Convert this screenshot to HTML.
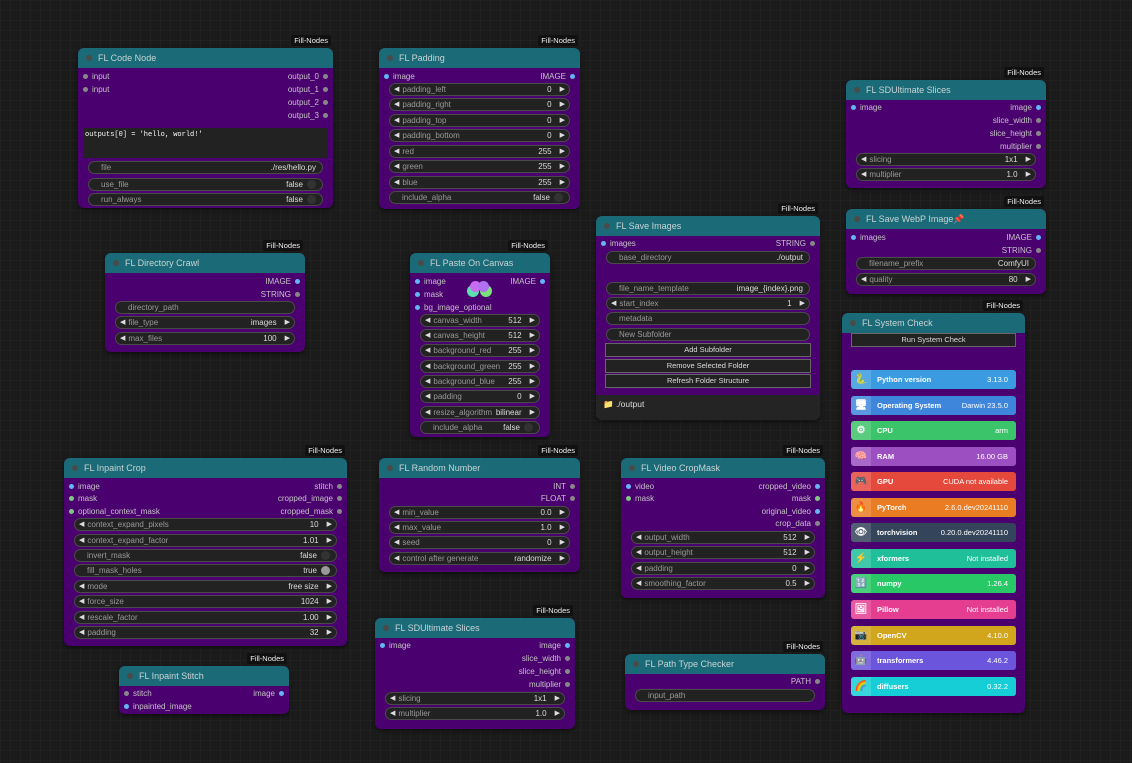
<!DOCTYPE html>
<html><head><meta charset="utf-8"><style>
*{box-sizing:border-box;margin:0;padding:0}
body{width:1132px;height:763px;overflow:hidden;background:#1b1b1b;background-image:linear-gradient(#212121 1px,transparent 1px),linear-gradient(90deg,#212121 1px,transparent 1px);background-size:10px 10px;font-family:"Liberation Sans",sans-serif;position:relative}
.n{position:absolute;background:#4a016f;border-radius:6px;box-shadow:0 2px 4px rgba(0,0,0,.5)}
.t{height:20px;background:#1a6b77;border-radius:6px 6px 0 0;color:#c9d3d6;font-size:9px;line-height:20px;padding-left:20px;position:relative}
.t:before{content:"";position:absolute;left:8px;top:7px;width:6px;height:6px;border-radius:50%;background:#4a4a4a}
.bd{position:absolute;top:-13px;right:2px;background:#111;color:#eee;font-size:7.5px;padding:1px 3px;border-radius:2px;line-height:9px}
.r{position:absolute;height:10px;margin-top:-5px;font-size:8px;line-height:10px;color:#c4c4c4;white-space:nowrap}
.l{left:4px;padding-left:10px}
.rr{right:4px;padding-right:10px}
.l:before,.rr:after{content:"";position:absolute;top:2px;width:5px;height:5px;border-radius:50%;background:var(--c,#888)}
.l:before{left:1px}.rr:after{right:1px}
.w{position:absolute;left:10px;right:10px;height:13px;margin-top:-7px;background:#222;border:1px solid #4a4a4a;border-radius:7px;font-size:8px;line-height:11px;color:#9a9a9a;display:flex;padding:0 6px 0 12px;white-space:nowrap}
.w span{flex:1}.w b{font-weight:normal;color:#ddd}
.w.a{padding:0 4px}
.w.a:before{content:"◀";color:#ddd;font-size:7px;margin-right:3px}
.w.a:after{content:"▶";color:#ddd;font-size:7px;margin-left:8px}
.w i{display:inline-block;width:9px;height:9px;border-radius:50%;background:#333;margin:1px 0 0 4px}
.btn{position:absolute;left:9px;right:9px;height:14px;margin-top:-7px;background:#222;border:1px solid #666;color:#ddd;font-size:7.5px;line-height:12px;text-align:center}
.sc{position:absolute;left:9px;right:9px;height:19px;border-radius:3px;font-size:7.5px;font-weight:bold;color:#fff;line-height:19px;display:flex;padding-right:8px}
.sc em{font-style:normal;width:20px;height:19px;background:rgba(255,255,255,.15);border-radius:3px 0 0 3px;text-align:center;font-size:10px;margin-right:6px}
.sc span{flex:1}.sc b{font-weight:normal}
</style></head><body>

<div class="n" style="left:78px;top:48px;width:255px;height:160px">
<div class="t">FL Code Node</div><div class="bd">Fill-Nodes</div>
<div class="r l" style="top:29px">input</div><div class="r l" style="top:42px">input</div>
<div class="r rr" style="top:29px">output_0</div><div class="r rr" style="top:42px">output_1</div>
<div class="r rr" style="top:55px">output_2</div><div class="r rr" style="top:68px">output_3</div>
<div style="position:absolute;left:6px;right:6px;top:80px;height:30px;background:#222;color:#fff;font-family:'Liberation Mono',monospace;font-size:7px;padding:3px 1px">outputs[0] = 'hello, world!'</div>
<div class="w" style="top:120px"><span>file</span><b>./res/hello.py</b></div>
<div class="w" style="top:137px"><span>use_file</span><b>false</b><i></i></div>
<div class="w" style="top:152px"><span>run_always</span><b>false</b><i></i></div>
</div>

<div class="n" style="left:379px;top:48px;width:201px;height:161px">
<div class="t">FL Padding</div><div class="bd">Fill-Nodes</div>
<div class="r l" style="top:29px;--c:#64b5f6">image</div><div class="r rr" style="top:29px;--c:#64b5f6">IMAGE</div>
<div class="w a" style="top:42px"><span>padding_left</span><b>0</b></div>
<div class="w a" style="top:57px"><span>padding_right</span><b>0</b></div>
<div class="w a" style="top:73px"><span>padding_top</span><b>0</b></div>
<div class="w a" style="top:88px"><span>padding_bottom</span><b>0</b></div>
<div class="w a" style="top:104px"><span>red</span><b>255</b></div>
<div class="w a" style="top:119px"><span>green</span><b>255</b></div>
<div class="w a" style="top:135px"><span>blue</span><b>255</b></div>
<div class="w" style="top:150px"><span>include_alpha</span><b>false</b><i></i></div>
</div>

<div class="n" style="left:846px;top:80px;width:200px;height:108px">
<div class="t">FL SDUltimate Slices</div><div class="bd">Fill-Nodes</div>
<div class="r l" style="top:28px;--c:#64b5f6">image</div><div class="r rr" style="top:28px;--c:#64b5f6">image</div>
<div class="r rr" style="top:41px">slice_width</div><div class="r rr" style="top:54px">slice_height</div><div class="r rr" style="top:67px">multiplier</div>
<div class="w a" style="top:80px"><span>slicing</span><b>1x1</b></div>
<div class="w a" style="top:95px"><span>multiplier</span><b>1.0</b></div>
</div>

<div class="n" style="left:846px;top:209px;width:200px;height:85px">
<div class="t">FL Save WebP Image📌</div><div class="bd">Fill-Nodes</div>
<div class="r l" style="top:29px;--c:#64b5f6">images</div><div class="r rr" style="top:29px;--c:#64b5f6">IMAGE</div>
<div class="r rr" style="top:42px">STRING</div>
<div class="w" style="top:55px"><span>filename_prefix</span><b>ComfyUI</b></div>
<div class="w a" style="top:71px"><span>quality</span><b>80</b></div>
</div>

<div class="n" style="left:842px;top:313px;width:183px;height:400px">
<div class="t">FL System Check</div><div class="bd">Fill-Nodes</div>
<div class="btn" style="top:27px;border-radius:0">Run System Check</div>
<div class="sc" style="top:57px;background:#3a9be0"><em>🐍</em><span>Python version</span><b>3.13.0</b></div>
<div class="sc" style="top:83px;background:#3e86dc"><em>🖥</em><span>Operating System</span><b>Darwin 23.5.0</b></div>
<div class="sc" style="top:108px;background:#3cc46a"><em>⚙</em><span>CPU</span><b>arm</b></div>
<div class="sc" style="top:134px;background:#9b4fc0"><em>🧠</em><span>RAM</span><b>16.00 GB</b></div>
<div class="sc" style="top:159px;background:#e5493c"><em>🎮</em><span>GPU</span><b>CUDA not available</b></div>
<div class="sc" style="top:185px;background:#ea7d24"><em>🔥</em><span>PyTorch</span><b>2.6.0.dev20241110</b></div>
<div class="sc" style="top:210px;background:#34445a"><em>👁</em><span>torchvision</span><b>0.20.0.dev20241110</b></div>
<div class="sc" style="top:236px;background:#1fbf9a"><em>⚡</em><span>xformers</span><b>Not installed</b></div>
<div class="sc" style="top:261px;background:#28c866"><em>🔢</em><span>numpy</span><b>1.26.4</b></div>
<div class="sc" style="top:287px;background:#e53d8f"><em>🖼</em><span>Pillow</span><b>Not installed</b></div>
<div class="sc" style="top:313px;background:#d1a51c"><em>📷</em><span>OpenCV</span><b>4.10.0</b></div>
<div class="sc" style="top:338px;background:#6a55dc"><em>🤖</em><span>transformers</span><b>4.46.2</b></div>
<div class="sc" style="top:364px;background:#16cfd6"><em>🌈</em><span>diffusers</span><b>0.32.2</b></div>
</div>

<div class="n" style="left:105px;top:253px;width:200px;height:99px">
<div class="t">FL Directory Crawl</div><div class="bd">Fill-Nodes</div>
<div class="r rr" style="top:29px;--c:#64b5f6">IMAGE</div><div class="r rr" style="top:42px">STRING</div>
<div class="w" style="top:55px"><span>directory_path</span></div>
<div class="w a" style="top:70px"><span>file_type</span><b>images</b></div>
<div class="w a" style="top:86px"><span>max_files</span><b>100</b></div>
</div>

<div class="n" style="left:410px;top:253px;width:140px;height:184px">
<div class="t">FL Paste On Canvas</div><div class="bd">Fill-Nodes</div>
<div class="r l" style="top:29px;--c:#64b5f6">image</div><div class="r l" style="top:42px;--c:#64b5f6">mask</div><div class="r l" style="top:55px;--c:#64b5f6">bg_image_optional</div>
<div class="r rr" style="top:29px;--c:#64b5f6">IMAGE</div>
<div style="position:absolute;left:57px;top:28px;width:26px;height:18px">
<div style="position:absolute;left:0;top:4px;width:12px;height:12px;border-radius:50%;background:#5ce0b0"></div>
<div style="position:absolute;left:13px;top:4px;width:12px;height:12px;border-radius:50%;background:#7ae27a"></div>
<div style="position:absolute;left:3px;top:0;width:11px;height:11px;border-radius:50%;background:#c86cf0"></div>
<div style="position:absolute;left:11px;top:0;width:11px;height:11px;border-radius:50%;background:#b070f0"></div></div>
<div class="w a" style="top:68px"><span>canvas_width</span><b>512</b></div>
<div class="w a" style="top:83px"><span>canvas_height</span><b>512</b></div>
<div class="w a" style="top:98px"><span>background_red</span><b>255</b></div>
<div class="w a" style="top:114px"><span>background_green</span><b>255</b></div>
<div class="w a" style="top:129px"><span>background_blue</span><b>255</b></div>
<div class="w a" style="top:144px"><span>padding</span><b>0</b></div>
<div class="w a" style="top:160px"><span>resize_algorithm</span><b>bilinear</b></div>
<div class="w" style="top:175px"><span>include_alpha</span><b>false</b><i></i></div>
</div>

<div class="n" style="left:596px;top:216px;width:224px;height:204px;background:linear-gradient(#4a016f 179px,#242424 179px)">
<div class="t">FL Save Images</div><div class="bd">Fill-Nodes</div>
<div class="r l" style="top:28px;--c:#64b5f6">images</div><div class="r rr" style="top:28px">STRING</div>
<div class="w" style="top:42px"><span>base_directory</span><b>./output</b></div>
<div class="w" style="top:73px"><span>file_name_template</span><b>image_{index}.png</b></div>
<div class="w a" style="top:88px"><span>start_index</span><b>1</b></div>
<div class="w" style="top:103px"><span>metadata</span></div>
<div class="w" style="top:119px"><span>New Subfolder</span></div>
<div class="btn" style="top:134px">Add Subfolder</div>
<div class="btn" style="top:150px">Remove Selected Folder</div>
<div class="btn" style="top:165px">Refresh Folder Structure</div>
<div style="position:absolute;left:7px;top:183px;color:#ddd;font-size:8.5px">📁 ./output</div>
</div>

<div class="n" style="left:64px;top:458px;width:283px;height:188px">
<div class="t">FL Inpaint Crop</div><div class="bd">Fill-Nodes</div>
<div class="r l" style="top:29px;--c:#64b5f6">image</div><div class="r l" style="top:41px;--c:#81c784">mask</div><div class="r l" style="top:54px;--c:#81c784">optional_context_mask</div>
<div class="r rr" style="top:29px">stitch</div><div class="r rr" style="top:41px">cropped_image</div><div class="r rr" style="top:54px">cropped_mask</div>
<div class="w a" style="top:67px"><span>context_expand_pixels</span><b>10</b></div>
<div class="w a" style="top:83px"><span>context_expand_factor</span><b>1.01</b></div>
<div class="w" style="top:98px"><span>invert_mask</span><b>false</b><i></i></div>
<div class="w" style="top:113px"><span>fill_mask_holes</span><b>true</b><i style="background:#999"></i></div>
<div class="w a" style="top:129px"><span>mode</span><b>free size</b></div>
<div class="w a" style="top:144px"><span>force_size</span><b>1024</b></div>
<div class="w a" style="top:160px"><span>rescale_factor</span><b>1.00</b></div>
<div class="w a" style="top:175px"><span>padding</span><b>32</b></div>
</div>

<div class="n" style="left:379px;top:458px;width:201px;height:114px">
<div class="t">FL Random Number</div><div class="bd">Fill-Nodes</div>
<div class="r rr" style="top:29px">INT</div><div class="r rr" style="top:41px">FLOAT</div>
<div class="w a" style="top:55px"><span>min_value</span><b>0.0</b></div>
<div class="w a" style="top:70px"><span>max_value</span><b>1.0</b></div>
<div class="w a" style="top:85px"><span>seed</span><b>0</b></div>
<div class="w a" style="top:101px"><span>control after generate</span><b>randomize</b></div>
</div>

<div class="n" style="left:621px;top:458px;width:204px;height:140px">
<div class="t">FL Video CropMask</div><div class="bd">Fill-Nodes</div>
<div class="r l" style="top:29px;--c:#64b5f6">video</div><div class="r l" style="top:41px;--c:#81c784">mask</div>
<div class="r rr" style="top:29px;--c:#64b5f6">cropped_video</div><div class="r rr" style="top:41px;--c:#81c784">mask</div><div class="r rr" style="top:54px;--c:#64b5f6">original_video</div><div class="r rr" style="top:66px">crop_data</div>
<div class="w a" style="top:80px"><span>output_width</span><b>512</b></div>
<div class="w a" style="top:95px"><span>output_height</span><b>512</b></div>
<div class="w a" style="top:111px"><span>padding</span><b>0</b></div>
<div class="w a" style="top:126px"><span>smoothing_factor</span><b>0.5</b></div>
</div>

<div class="n" style="left:119px;top:666px;width:170px;height:48px">
<div class="t">FL Inpaint Stitch</div><div class="bd">Fill-Nodes</div>
<div class="r l" style="top:28px">stitch</div><div class="r l" style="top:41px;--c:#64b5f6">inpainted_image</div>
<div class="r rr" style="top:28px;--c:#64b5f6">image</div>
</div>

<div class="n" style="left:375px;top:618px;width:200px;height:111px">
<div class="t">FL SDUltimate Slices</div><div class="bd">Fill-Nodes</div>
<div class="r l" style="top:28px;--c:#64b5f6">image</div><div class="r rr" style="top:28px;--c:#64b5f6">image</div>
<div class="r rr" style="top:41px">slice_width</div><div class="r rr" style="top:54px">slice_height</div><div class="r rr" style="top:67px">multiplier</div>
<div class="w a" style="top:81px"><span>slicing</span><b>1x1</b></div>
<div class="w a" style="top:96px"><span>multiplier</span><b>1.0</b></div>
</div>

<div class="n" style="left:625px;top:654px;width:200px;height:56px">
<div class="t">FL Path Type Checker</div><div class="bd">Fill-Nodes</div>
<div class="r rr" style="top:28px">PATH</div>
<div class="w" style="top:42px"><span>input_path</span></div>
</div>

</body></html>
